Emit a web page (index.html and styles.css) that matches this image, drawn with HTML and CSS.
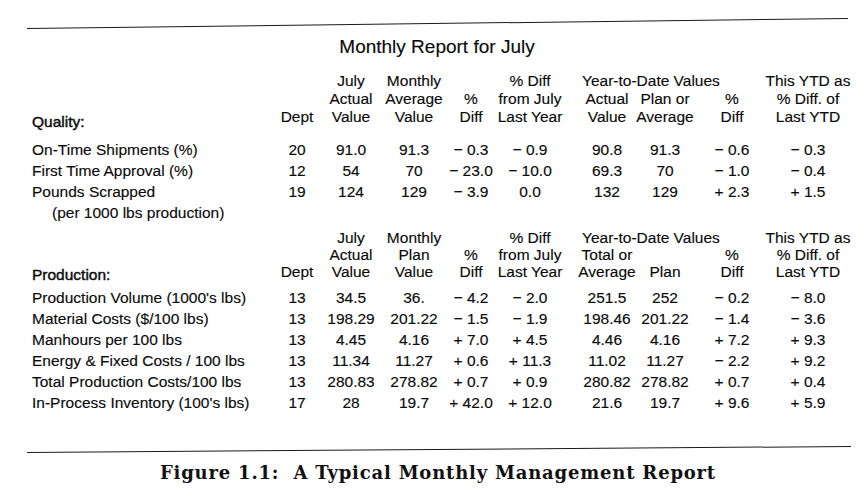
FILE: index.html
```html
<!DOCTYPE html>
<html lang="en">
<head>
<meta charset="utf-8">
<title>Monthly Report for July</title>
<link rel="stylesheet" href="styles.css">
</head>
<body>
<div class="page">
  <div class="rule rule-top"></div>
  <div class="title">Monthly Report for July</div>

  <div class="cols thead q-head">
    <div class="c lbl sec q-sec span2">Quality:</div>
    <div class="c span2">Dept</div>
    <div class="c span2">July<br>Actual<br>Value</div>
    <div class="c span2">Monthly<br>Average<br>Value</div>
    <div class="c span2">%<br>Diff</div>
    <div class="c span2">% Diff<br>from July<br>Last Year</div>
    <div class="c group">Year-to-Date Values</div>
    <div class="c span2">This YTD as<br>% Diff. of<br>Last YTD</div>
    <div class="c">Actual<br>Value</div>
    <div class="c">Plan or<br>Average</div>
    <div class="c">%<br>Diff</div>
  </div>

  <div class="cols tbody q-body">
    <div class="c lbl">On-Time Shipments (%)</div><div class="c">20</div><div class="c">91.0</div><div class="c">91.3</div><div class="c">− 0.3</div><div class="c">− 0.9</div><div class="c">90.8</div><div class="c">91.3</div><div class="c">− 0.6</div><div class="c">− 0.3</div>
    <div class="c lbl">First Time Approval (%)</div><div class="c">12</div><div class="c">54</div><div class="c">70</div><div class="c">− 23.0</div><div class="c">− 10.0</div><div class="c">69.3</div><div class="c">70</div><div class="c">− 1.0</div><div class="c">− 0.4</div>
    <div class="c lbl">Pounds Scrapped</div><div class="c">19</div><div class="c">124</div><div class="c">129</div><div class="c">− 3.9</div><div class="c">0.0</div><div class="c">132</div><div class="c">129</div><div class="c">+ 2.3</div><div class="c">+ 1.5</div>
    <div class="c lbl sub full">(per 1000 lbs production)</div>
  </div>

  <div class="cols thead p-head">
    <div class="c lbl sec p-sec span2">Production:</div>
    <div class="c span2">Dept</div>
    <div class="c span2">July<br>Actual<br>Value</div>
    <div class="c span2">Monthly<br>Plan<br>Value</div>
    <div class="c span2">%<br>Diff</div>
    <div class="c span2">% Diff<br>from July<br>Last Year</div>
    <div class="c group">Year-to-Date Values</div>
    <div class="c span2">This YTD as<br>% Diff. of<br>Last YTD</div>
    <div class="c">Total or<br>Average</div>
    <div class="c">Plan</div>
    <div class="c">%<br>Diff</div>
  </div>

  <div class="cols tbody p-body">
    <div class="c lbl">Production Volume (1000's lbs)</div><div class="c">13</div><div class="c">34.5</div><div class="c">36.</div><div class="c">− 4.2</div><div class="c">− 2.0</div><div class="c">251.5</div><div class="c">252</div><div class="c">− 0.2</div><div class="c">− 8.0</div>
    <div class="c lbl">Material Costs ($/100 lbs)</div><div class="c">13</div><div class="c">198.29</div><div class="c">201.22</div><div class="c">− 1.5</div><div class="c">− 1.9</div><div class="c">198.46</div><div class="c">201.22</div><div class="c">− 1.4</div><div class="c">− 3.6</div>
    <div class="c lbl">Manhours per 100 lbs</div><div class="c">13</div><div class="c">4.45</div><div class="c">4.16</div><div class="c">+ 7.0</div><div class="c">+ 4.5</div><div class="c">4.46</div><div class="c">4.16</div><div class="c">+ 7.2</div><div class="c">+ 9.3</div>
    <div class="c lbl">Energy &amp; Fixed Costs / 100 lbs</div><div class="c">13</div><div class="c">11.34</div><div class="c">11.27</div><div class="c">+ 0.6</div><div class="c">+ 11.3</div><div class="c">11.02</div><div class="c">11.27</div><div class="c">− 2.2</div><div class="c">+ 9.2</div>
    <div class="c lbl">Total Production Costs/100 lbs</div><div class="c">13</div><div class="c">280.83</div><div class="c">278.82</div><div class="c">+ 0.7</div><div class="c">+ 0.9</div><div class="c">280.82</div><div class="c">278.82</div><div class="c">+ 0.7</div><div class="c">+ 0.4</div>
    <div class="c lbl">In-Process Inventory (100's lbs)</div><div class="c">17</div><div class="c">28</div><div class="c">19.7</div><div class="c">+ 42.0</div><div class="c">+ 12.0</div><div class="c">21.6</div><div class="c">19.7</div><div class="c">+ 9.6</div><div class="c">+ 5.9</div>
  </div>

  <div class="rule rule-bottom"></div>
  <div class="caption">Figure 1.1:&nbsp; A Typical Monthly Management Report</div>
</div>
</body>
</html>
```

FILE: styles.css
```css
html, body {
  margin: 0;
  padding: 0;
  background: #fff;
}

body {
  width: 868px;
  height: 496px;
  overflow: hidden;
  font-family: "Liberation Sans", Arial, sans-serif;
  font-size: 15.5px;
  color: #0a0a0a;
  -webkit-text-stroke: 0.15px #0a0a0a;
}

.page {
  padding-top: 23px;
}

.rule {
  height: 0;
  border-top: 1.6px solid #1a1a1a;
}

.rule-top {
  margin: 0 20px 0 27px;
  transform: rotate(-0.7deg);
}

.rule-bottom {
  margin: 36px 17px 0 27px;
  transform: rotate(-0.42deg);
}

.title {
  margin-top: 12px;
  padding-left: 6px;
  text-align: center;
  font-size: 19px;
  line-height: 22px;
}

.cols {
  display: grid;
  grid-template-columns: 272px 50px 58px 68px 46px 72px 82px 34px 100px 52px;
}

.thead {
  grid-template-rows: 17px 34px;
  line-height: 17px;
}

.q-head {
  margin-top: 13.5px;
  grid-template-rows: 18px 36px;
  line-height: 18px;
}

.p-head {
  margin-top: 6px;
}

.tbody {
  grid-auto-rows: 21px;
  line-height: 21px;
}

.q-body {
  margin-top: 13.5px;
}

.p-body {
  margin-top: 7px;
}

.c {
  display: flex;
  justify-content: center;
  align-items: flex-end;
  white-space: nowrap;
  text-align: center;
}

.tbody .c {
  align-items: center;
}

.span2 {
  grid-row: span 2;
}

.group {
  grid-column: span 3;
  justify-content: flex-start;
  padding-left: 16px;
}

.lbl {
  justify-content: flex-start;
  padding-left: 32px;
  text-align: left;
}

.sec {
  -webkit-text-stroke: 0.45px #111;
  position: relative;
}

.q-sec {
  top: 5px;
}

.p-sec {
  top: 3px;
}

.sub {
  padding-left: 52px;
}

.full {
  grid-column: 1 / -1;
}

.caption {
  margin-top: 12px;
  padding-left: 8px;
  text-align: center;
  font-family: "DejaVu Serif", "Liberation Serif", serif;
  font-weight: 700;
  font-size: 18px;
  letter-spacing: 0.8px;
  line-height: 22px;
  color: #111;
  -webkit-text-stroke: 0;
}
```
